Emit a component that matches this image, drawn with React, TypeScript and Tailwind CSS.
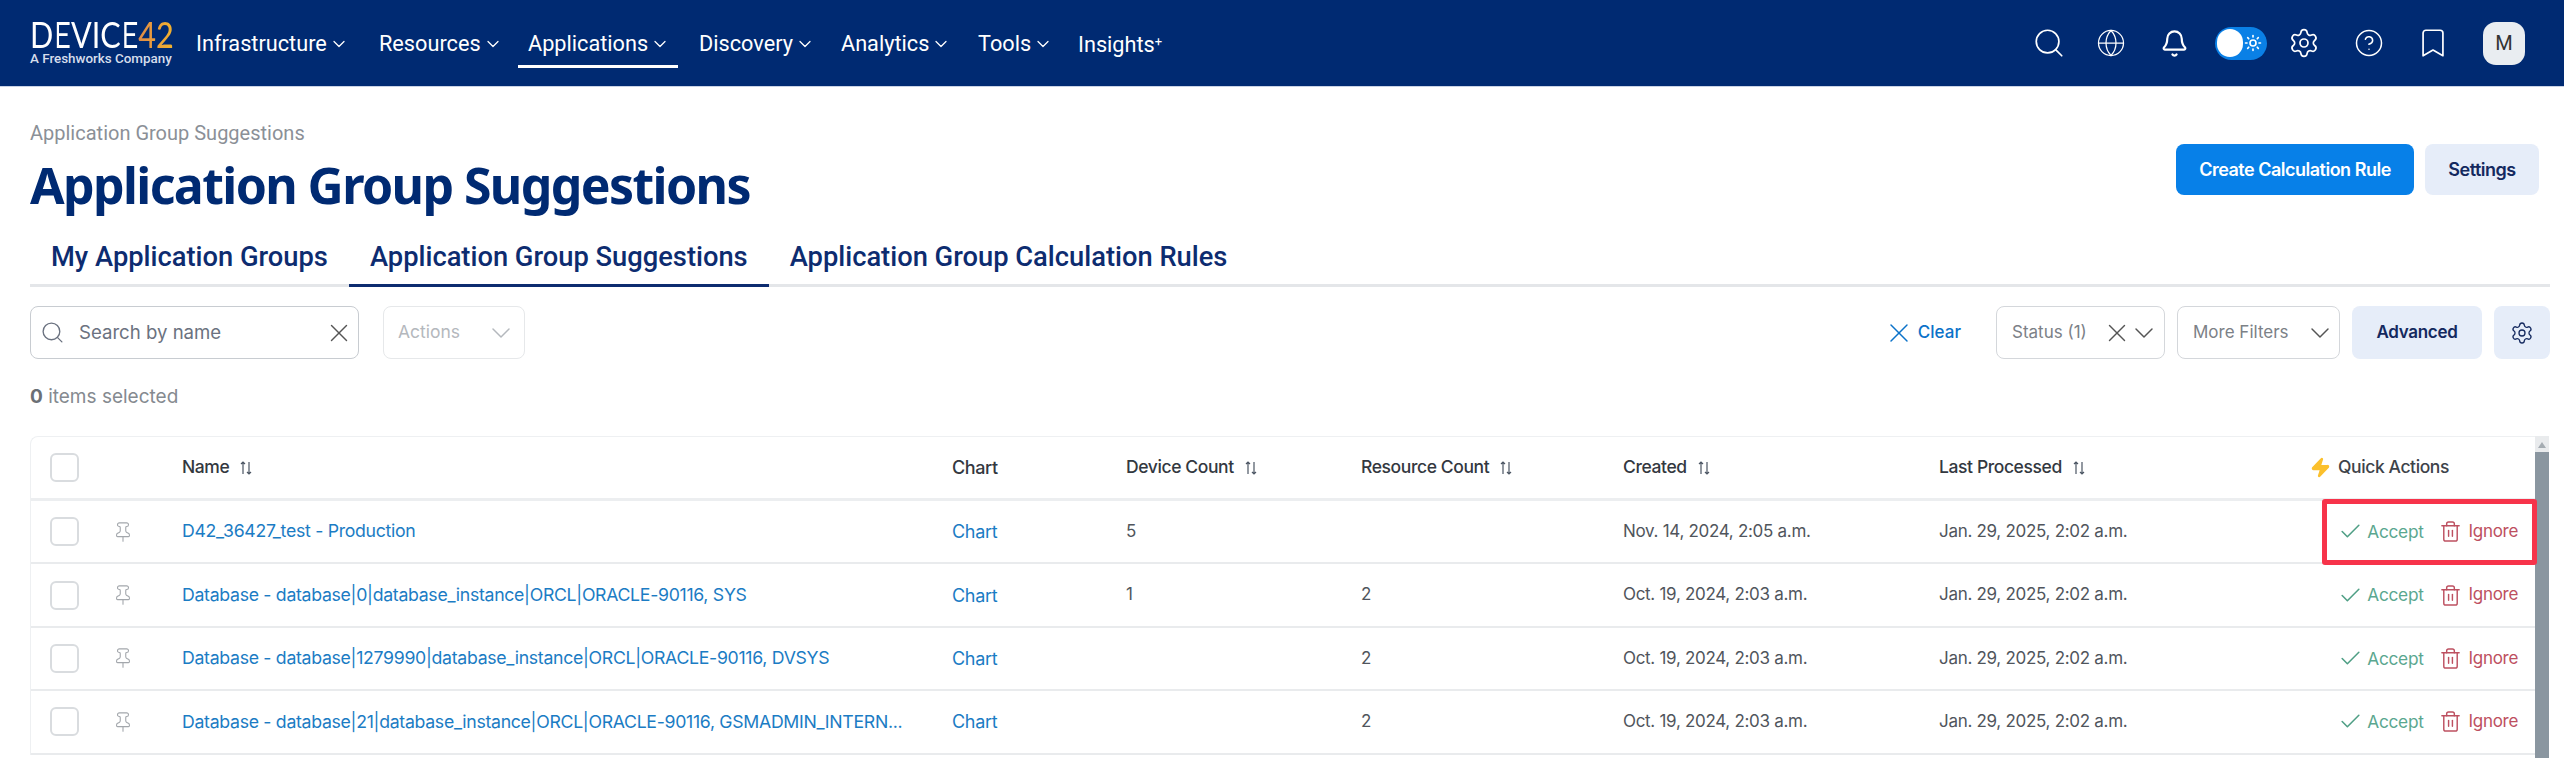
import { Bell, Bookmark, Check, ChevronDown, CircleHelp, Globe, Pin, Search, Settings, Sun, Trash2, X, Zap } from 'lucide-react'

const navItems = [
  { label: 'Infrastructure', width: 'w-[172px]' },
  { label: 'Resources', width: 'w-[138px]' },
  { label: 'Applications', width: 'w-[160px]' },
  { label: 'Discovery', width: 'w-[131px]' },
  { label: 'Analytics', width: 'w-[126px]' },
  { label: 'Tools', width: 'w-[89px]' },
]

const rows = [
  { name: 'D42_36427_test - Production', device: '5', resource: '', created: 'Nov. 14, 2024, 2:05 a.m.' },
  { name: 'Database - database|0|database_instance|ORCL|ORACLE-90116, SYS', device: '1', resource: '2', created: 'Oct. 19, 2024, 2:03 a.m.' },
  { name: 'Database - database|1279990|database_instance|ORCL|ORACLE-90116, DVSYS', device: '', resource: '2', created: 'Oct. 19, 2024, 2:03 a.m.' },
  { name: 'Database - database|21|database_instance|ORCL|ORACLE-90116, GSMADMIN_INTERN...', device: '', resource: '2', created: 'Oct. 19, 2024, 2:03 a.m.' },
]

const gridCols = 'grid grid-cols-[151px_770px_174px_235px_262px_316px_371px_1fr] items-center'

function SortIcon() {
  return (
    <svg width="12" height="16" viewBox="0 0 12 16" fill="none" stroke="#4b5563" strokeWidth="1.2" className="ml-[11px] shrink-0">
      <path d="M3 14V2M1 4 3 2l2 2M9 2v12M7 12l2 2 2-2" />
    </svg>
  )
}

function Checkbox() {
  return <div className="ml-[19px] h-[29px] w-[29px] shrink-0 rounded-[6px] border-2 border-[#d9dcdf] bg-white" />
}

function HeaderCell({ label }: { label: string }) {
  return (
    <div className="flex items-center text-[17.5px] font-medium tracking-[-0.4px] text-[#33383f]">
      {label}
      <SortIcon />
    </div>
  )
}

function Spineless() {
  // the logo's E has no spine: clip it off the real letter
  return <span className="inline-block [clip-path:inset(0_0_0_20%)]">E</span>
}

export default function App() {
  return (
    <div className="h-[758px] w-[2564px] overflow-hidden bg-white font-['Inter',sans-serif]">
      <nav className="flex h-[87px] items-center border-b border-[#c9d3e6] bg-[#002a72] pl-[30px] text-white">
        <div className="w-[156px] shrink-0">
          <div className="flex h-[28px] origin-left scale-x-[0.85] items-center whitespace-nowrap font-['Lato',sans-serif] text-[36px] font-normal leading-none">
            D<Spineless />VIC<Spineless />
            <span className="bg-gradient-to-r from-[#e08a45] to-[#f2b32c] bg-clip-text font-medium text-transparent">42</span>
          </div>
          <div className="mt-[4px] whitespace-nowrap font-['Roboto',sans-serif] text-[13.4px] font-medium leading-[14px] text-[#d6deec]">A Freshworks Company</div>
        </div>
        <div className="mt-[5px] flex items-center gap-[11px] font-['Roboto',sans-serif] text-[21.7px]">
          {navItems.map((item) => (
            <div
              key={item.label}
              className={`flex h-[44px] ${item.width} shrink-0 items-center gap-[2px] border-b-[3px] pl-[10px] ${item.label === 'Applications' ? 'border-white' : 'border-transparent'}`}
            >
              {item.label}
              <ChevronDown size={20} strokeWidth={1.5} />
            </div>
          ))}
          <div className="pl-[10px]">
            Insights<sup className="text-[13px]">+</sup>
          </div>
        </div>
        <div className="ml-auto mr-[39px] flex items-center">
          <Search size={34} strokeWidth={1.2} />
          <Globe size={30} strokeWidth={1} className="ml-[30px]" />
          <Bell size={29} strokeWidth={1.8} className="ml-[34px]" />
          <div className="ml-[26px] flex h-[33px] w-[52px] items-center justify-between rounded-full bg-[#0a80e6] pl-[2px] pr-[5px]">
            <div className="h-[28px] w-[26px] rounded-full bg-white" />
            <Sun size={18} strokeWidth={2.2} />
          </div>
          <Settings size={32} strokeWidth={1.3} className="ml-[21px]" />
          <CircleHelp size={30} strokeWidth={1.2} className="ml-[34px]" />
          <Bookmark size={34} strokeWidth={1.2} className="ml-[32px]" />
          <div className="ml-[33px] flex h-[43px] w-[42px] items-center justify-center rounded-[13px] bg-[#e9edf1] font-['Roboto',sans-serif] text-[20px] text-[#333]">M</div>
        </div>
      </nav>

      <main className="pl-[30px] pr-[14px]">
        <div className="flex items-start justify-between pr-[11px]">
          <div>
            <div className="mt-[35px] font-['Roboto',sans-serif] text-[20px] leading-[22px] text-[#8b9097]">Application Group Suggestions</div>
            <h1 className="mt-[10px] font-['Noto_Sans',sans-serif] text-[50px] font-bold leading-[62px] tracking-[-1.6px] text-[#002a72]">Application Group Suggestions</h1>
          </div>
          <div className="mt-[57px] flex gap-[11px]">
            <button className="h-[51px] w-[238px] rounded-[8px] bg-[#0780e8] text-[18px] font-semibold tracking-[-0.5px] text-white">Create Calculation Rule</button>
            <button className="h-[51px] w-[114px] rounded-[8px] bg-[#e6edf9] text-[18px] font-semibold tracking-[-0.5px] text-[#14295f]">Settings</button>
          </div>
        </div>

        <div className="mt-[21px] flex h-[50px] border-b-[3px] border-[#e4e6e9] font-['Roboto',sans-serif] text-[27.3px] font-medium leading-[40px] text-[#0d2c70]">
          <div className="-mb-[3px] px-[21px]">My Application Groups</div>
          <div className="-mb-[3px] border-b-[3px] border-[#0d2c70] px-[21px]">Application Group Suggestions</div>
          <div className="px-[21px]">Application Group Calculation Rules</div>
        </div>

        <div className="mt-[19px] flex h-[53px] items-center text-[17px]">
          <div className="flex h-full w-[329px] items-center rounded-[8px] border border-[#c8ccd1] pl-[9px] pr-[4px] text-[#6b7280]">
            <Search size={25} strokeWidth={1.3} />
            <span className="ml-[14px] text-[18.6px]">Search by name</span>
            <X size={30} strokeWidth={1.1} className="ml-auto text-[#555]" />
          </div>
          <div className="ml-[24px] flex h-full w-[142px] items-center justify-between rounded-[8px] border border-[#e6e8ea] pl-[14px] pr-[7px] text-[17.5px] text-[#b4b8bd]">
            Actions
            <ChevronDown size={32} strokeWidth={1.1} />
          </div>
          <div className="ml-auto flex items-center gap-[3px] text-[#0b72c9]">
            <X size={32} strokeWidth={1.1} />
            <span className="font-medium">Clear</span>
          </div>
          <div className="ml-[35px] flex h-full w-[169px] items-center rounded-[8px] border border-[#d4d7db] pl-[15px] pr-[4px] text-[#7c8187]">
            Status (1)
            <X size={30} strokeWidth={1.1} className="ml-auto text-[#555]" />
            <ChevronDown size={32} strokeWidth={1.1} className="-ml-[4px] text-[#555]" />
          </div>
          <div className="ml-[12px] flex h-full w-[163px] items-center justify-between rounded-[8px] border border-[#d4d7db] pl-[15px] pr-[3px] text-[#7c8187]">
            More Filters
            <ChevronDown size={32} strokeWidth={1.1} className="text-[#555]" />
          </div>
          <button className="ml-[12px] h-full w-[130px] rounded-[8px] bg-[#e6edf9] font-semibold tracking-[-0.3px] text-[#14295f]">Advanced</button>
          <button className="ml-[12px] flex h-full w-[56px] items-center justify-center rounded-[8px] bg-[#e6edf9] text-[#14295f]">
            <Settings size={24} strokeWidth={1.3} />
          </button>
        </div>

        <div className="mt-[27px] text-[19px] leading-[22px] text-[#858a90]">
          <span className="font-bold text-[#6b7076]">0</span> items selected
        </div>

        <div className="mt-[28px] flex items-start">
          <div className="w-[2505px] rounded-tl-[8px] border-l border-t border-[#eef0f2]">
            <div className={`${gridCols} h-[64px] border-b-[3px] border-[#eceef0]`}>
              <Checkbox />
              <HeaderCell label="Name" />
              <div className="text-[18px] font-medium tracking-[-0.4px] text-[#33383f]">Chart</div>
              <HeaderCell label="Device Count" />
              <HeaderCell label="Resource Count" />
              <HeaderCell label="Created" />
              <HeaderCell label="Last Processed" />
              <div className="flex items-center gap-[7px] text-[17.5px] font-medium tracking-[-0.4px] text-[#3e434a]">
                <Zap size={21} fill="#fbc02d" stroke="#fbc02d" />
                Quick Actions
              </div>
            </div>
            {rows.map((row, i) => (
              <div key={row.name} className={`${gridCols} relative h-[63.4px] border-b-2 border-[#e9ebed] text-[17px] tracking-[-0.3px] text-[#50555c]`}>
                <div className="flex items-center">
                  <Checkbox />
                  <Pin size={22} strokeWidth={1.2} className="ml-[33px] text-[#a3a7ac]" />
                </div>
                <div className="truncate pr-3 text-[17.7px] text-[#1b7cc4]">{row.name}</div>
                <div className="text-[18px] text-[#1b7cc4]">Chart</div>
                <div>{row.device}</div>
                <div>{row.resource}</div>
                <div>{row.created}</div>
                <div>Jan. 29, 2025, 2:02 a.m.</div>
                <div className="flex items-center justify-end pr-[17px]">
                  <Check size={25} strokeWidth={1.5} className="text-[#4f9f85]" />
                  <span className="ml-[4px] text-[17.3px] text-[#5aa78f]">Accept</span>
                  <Trash2 size={23} strokeWidth={1.5} className="ml-[15px] text-[#bd5060]" />
                  <span className="ml-[7px] text-[#bd5060]">Ignore</span>
                </div>
                {i === 0 && <div className="absolute -bottom-[3px] right-[-2px] top-[-2px] w-[215px] rounded-[3px] border-[5px] border-[#f7334a]" />}
              </div>
            ))}
          </div>
          <div className="flex h-[322px] w-[14px] flex-col items-center bg-[#e9ebed]">
            <svg width="8" height="6" viewBox="0 0 8 6" className="mt-[6px] shrink-0">
              <path d="M4 0 8 6H0Z" fill="#a5acb2" />
            </svg>
            <div className="mt-[4px] w-full flex-1 bg-[#8a96a0]" />
          </div>
        </div>
      </main>
    </div>
  )
}
